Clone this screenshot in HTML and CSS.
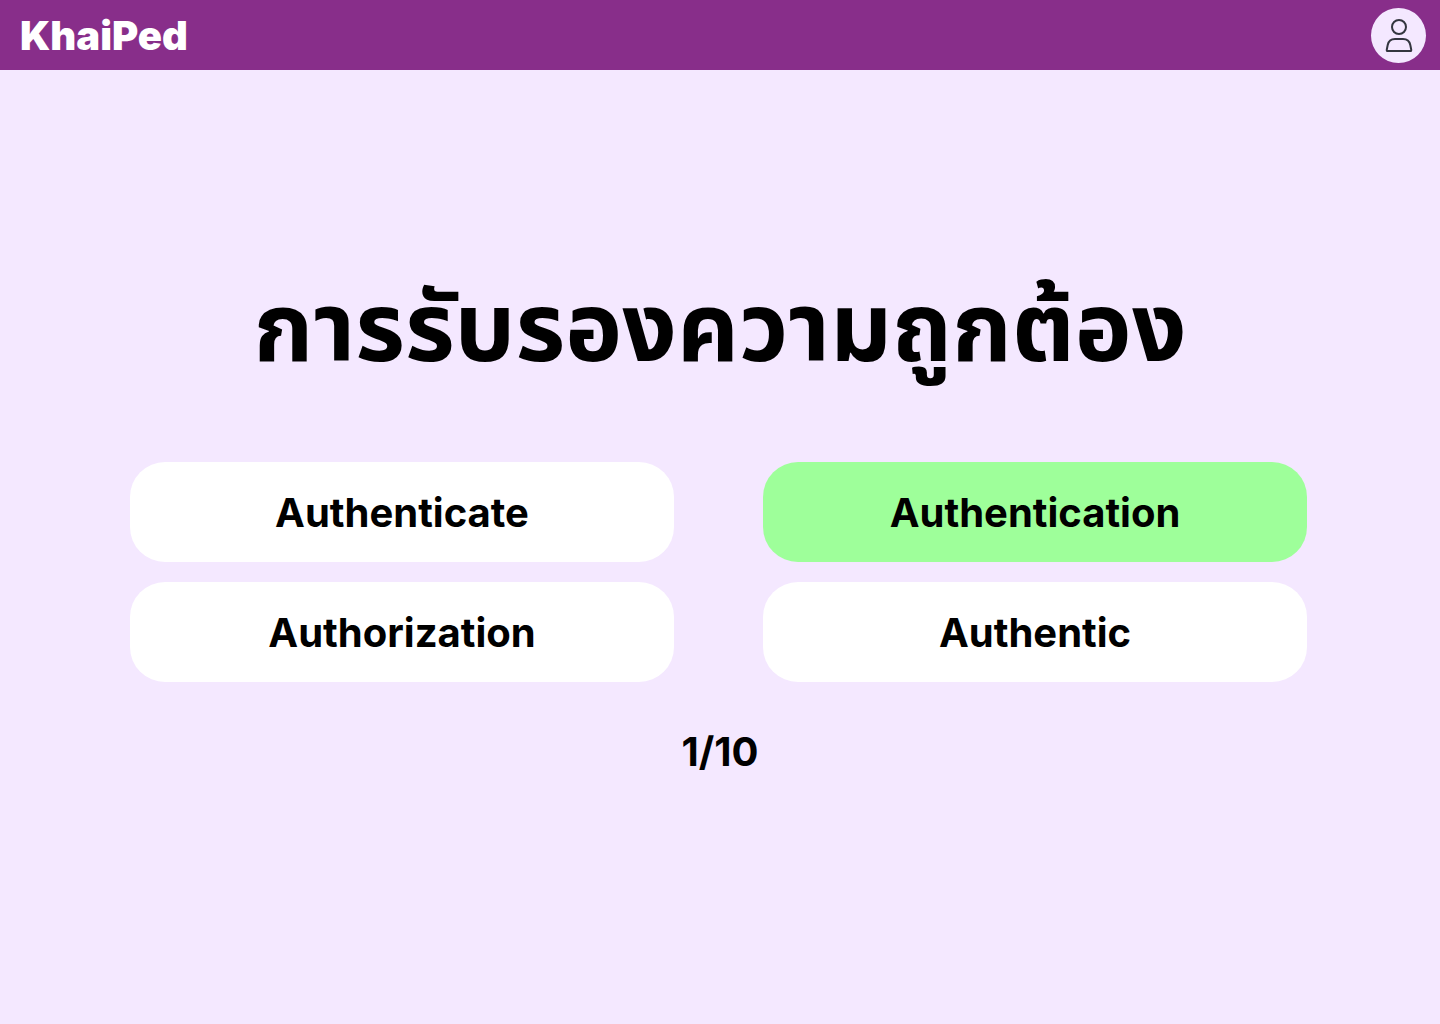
FILE: index.html
```html
<!DOCTYPE html>
<html lang="th">
<head>
<meta charset="utf-8">
<meta name="viewport" content="width=device-width, initial-scale=1">
<title>KhaiPed</title>
<link rel="stylesheet" href="styles.css">
</head>
<body>
<header class="topbar">
  <a class="brand" href="#">KhaiPed</a>
  <button class="profile" type="button" aria-label="Profile">
    <svg class="profile-icon" viewBox="0 0 28 34" aria-hidden="true">
      <circle cx="14" cy="9" r="7"/>
      <path d="M10 21H18C22 21 24.500 23 25.300 27L26.200 31.500C26.400 32.500 26.100 33 25.300 33H2.700C1.900 33 1.600 32.500 1.800 31.500L2.700 27C3.500 23 6 21 10 21Z"/>
    </svg>
  </button>
</header>
<main class="quiz">
  <h1 class="question">การรับรองความถูกต้อง</h1>
  <div class="answers">
    <button class="answer" type="button">Authenticate</button>
    <button class="answer answer-correct" type="button">Authentication</button>
    <button class="answer" type="button">Authorization</button>
    <button class="answer" type="button">Authentic</button>
  </div>
  <p class="progress">1/10</p>
</main>
</body>
</html>
```
FILE: styles.css
```css
* {
  box-sizing: border-box;
}

body {
  margin: 0;
  min-height: 100vh;
  background: #f4e8ff;
  color: #000;
  font-family: Inter, "Noto Sans Thai", "Noto Sans", sans-serif;
}

.topbar {
  display: flex;
  align-items: center;
  justify-content: space-between;
  height: 70px;
  padding: 0 14px 0 20px;
  background: #882e8a;
}

.brand {
  padding-top: 2px;
  color: #fff;
  font-size: 40px;
  font-weight: 900;
  line-height: 48px;
  text-decoration: none;
}

.profile {
  display: grid;
  place-items: center;
  width: 55px;
  height: 55px;
  padding: 0;
  border: 0;
  border-radius: 50%;
  background: #f4e8ff;
  cursor: pointer;
}

.profile-icon {
  width: 28px;
  height: 34px;
  fill: none;
  stroke: #33363f;
  stroke-width: 2;
}

.quiz {
  padding: 196px 130px 40px;
}

.question {
  margin: 0 0 76px;
  font-size: 96px;
  font-weight: 700;
  line-height: 120px;
  text-align: center;
}

.answers {
  display: grid;
  grid-template-columns: 1fr 1fr;
  gap: 20px 89px;
  padding-right: 3px;
}

.answer {
  height: 100px;
  padding: 0 20px;
  border: 0;
  border-radius: 35px;
  background: #fff;
  color: #000;
  font: inherit;
  font-size: 40px;
  font-weight: 700;
  cursor: pointer;
}

.answer-correct {
  background: #9eff9a;
}

.progress {
  margin: 46px 0 0;
  font-size: 40px;
  font-weight: 700;
  line-height: 48px;
  text-align: center;
}
```
